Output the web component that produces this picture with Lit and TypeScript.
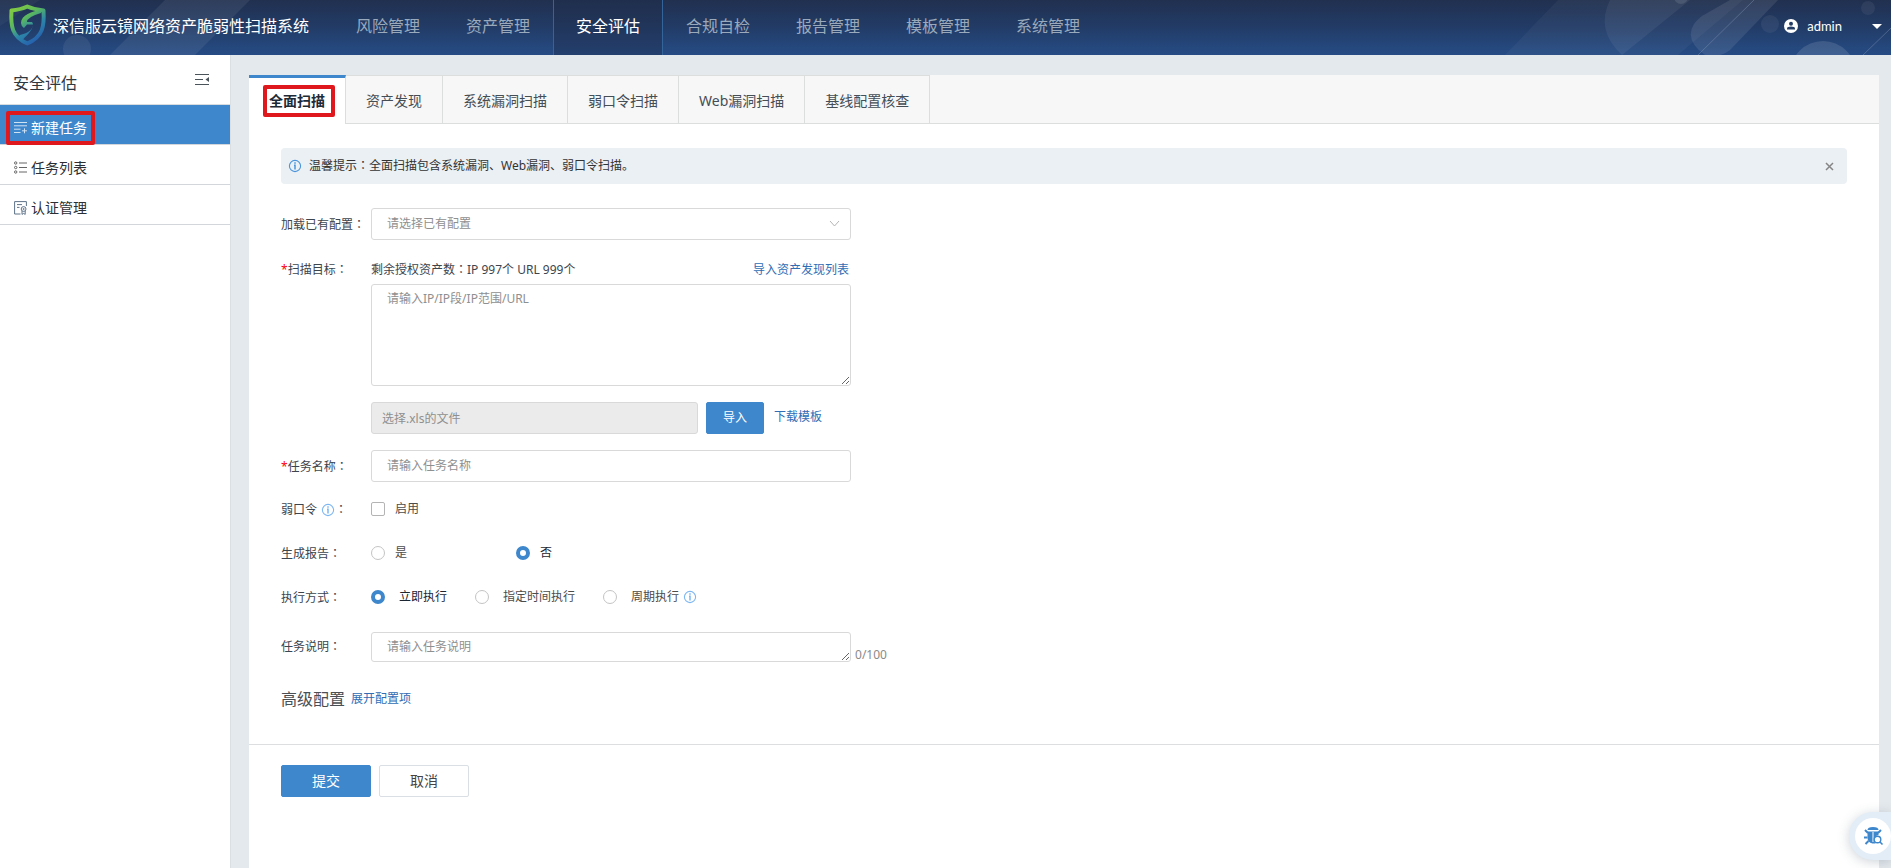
import { LitElement, html, svg, css } from "lit";
import { customElement, state } from "lit/decorators.js";
import { classMap } from "lit/directives/class-map.js";

const NAV = ["风险管理", "资产管理", "安全评估", "合规自检", "报告管理", "模板管理", "系统管理"];
const TABS = ["全面扫描", "资产发现", "系统漏洞扫描", "弱口令扫描", "Web漏洞扫描", "基线配置核查"];

const infoIcon = (cls = "") => html`<svg class="info ${cls}" viewBox="0 0 14 14" aria-hidden="true">
    <circle cx="7" cy="7" r="5.6" fill="none" stroke="currentColor" stroke-width="1.1" />
    <path d="M7 3.300v1.500M6 6.300h1v4.200" fill="none" stroke="currentColor" stroke-width="1.500" />
  </svg>`;

const colon = html`<span class="colon">：</span>`;

const newIcon = svg`<path d="M0 1.5h13M0 4.8h13M0 8.2h6.5M0 11.5h6.5M8 9.8h5M10.5 7.3v5" />`;
const listIcon = svg`<path d="M5 2h8M5 6.5h8M5 11h8" /><circle cx="1.7" cy="2" r="1.2" /><circle cx="1.7" cy="6.5" r="1.2" /><circle cx="1.7" cy="11" r="1.2" />`;
const certIcon = svg`<path d="M6.5 13H.6V.6h11.8V5M3 3.6h5M3 6.4h2.5" /><circle cx="9.6" cy="8" r="2.4" /><circle cx="9.6" cy="8" r=".6" /><path d="M8 10v3.4l1.6-1 1.6 1V10" />`;

const MENU = [
  { label: "新建任务", icon: newIcon, tone: "" },
  { label: "任务列表", icon: listIcon, tone: "" },
  { label: "认证管理", icon: certIcon, tone: "slate" },
];

@customElement("app-root")
export class AppRoot extends LitElement {
  @state() private nav = 2;
  @state() private menu = 0;
  @state() private tab = 0;
  @state() private tip = true;
  @state() private note = "";

  static styles = css`
    :host {
      display: flex;
      flex-direction: column;
      min-height: 100vh;
      background: #e4e9ed;
      color: #3c444d;
      font: 12px/20px "Noto Sans", "Noto Sans CJK SC", sans-serif;
    }
    * { box-sizing: border-box; }
    a { color: #2f6db5; text-decoration: none; }
    button, input, select, textarea { font: inherit; color: inherit; margin: 0; }
    button { cursor: pointer; }
    .colon { font-family: "Noto Sans CJK TC", sans-serif; line-height: 1; }

    .top {
      position: relative;
      display: flex;
      height: 55px;
      overflow: hidden;
      background: linear-gradient(#21304f, #223c67 50%, #264c85);
      color: #fff;
    }
    .deco { position: absolute; top: 0; height: 55px; }
    .deco.left { left: 0; width: 260px; }
    .deco.right { right: 0; width: 441px; }
    .brand {
      position: relative;
      display: flex;
      align-items: center;
      gap: 6px;
      width: 333px;
      flex: none;
      padding: 0 0 4px 8px;
      margin: 0;
      font-size: 16px;
      font-weight: 400;
      white-space: nowrap;
    }
    .brand svg { width: 39px; height: 43px; flex: none; }
    .nav { position: relative; display: flex; flex: 1; }
    .nav a {
      padding: 14px 22px 0;
      border: 1px solid transparent;
      border-width: 0 1px;
      font-size: 16px;
      line-height: 24px;
      color: #9aa9bb;
      white-space: nowrap;
    }
    .nav a.on { color: #fff; background: rgba(32, 45, 75, .4); border-color: #33659b; }
    .user {
      position: relative;
      display: flex;
      align-items: center;
      gap: 9px;
      padding: 0 9px 4px 0;
      border: 0;
      background: none;
      font-family: Lato, "Noto Sans", sans-serif;
      font-size: 13px;
    }
    .user svg { width: 14px; height: 14px; }
    .user .caret { width: 10px; height: 5px; margin: 2px 0 0 21px; }

    .body { display: flex; flex: 1; align-items: stretch; }
    .side { width: 231px; flex: none; background: #fff; border-right: 1px solid #dadfe3; }
    .side-head {
      display: flex;
      justify-content: space-between;
      height: 50px;
      padding: 16px 20px 0 13px;
      border-bottom: 1px solid #d9dcdf;
    }
    .side-head h2 { margin: 0; font-size: 16px; line-height: 24px; font-weight: 400; color: #2f3840; }
    .side-head button { padding: 0; border: 0; background: none; height: 16px; }
    .side-head svg { width: 16px; height: 16px; display: block; }
    .item {
      display: flex;
      align-items: center;
      gap: 4px;
      height: 40px;
      padding: 6px 0 0 14px;
      border-bottom: 1px solid #d3d7db;
      font-size: 14px;
      color: #2b2f33;
    }
    .item svg { width: 13px; height: 14px; flex: none; fill: none; stroke: #666; overflow: visible; }
    .item svg.slate { stroke: #5d7288; }
    .item.on { color: #fff; background: #3e87cc; }
    .item.on svg { stroke: #cfe2f4; }
    .mark { position: relative; display: inline-flex; align-items: center; gap: inherit; }
    .on > .mark::after {
      content: "";
      position: absolute;
      inset: -7px -8px;
      border: 4px solid #df181d;
      border-radius: 2px;
    }
    .tab.on > .mark::after { inset: -6px -10px -6px -6px; }

    .panel { flex: 1; min-width: 0; margin: 20px 12px 0 18px; background: #fff; }
    .tabs { display: flex; height: 49px; background: #f7f7f7; border-bottom: 1px solid #dcdddd; }
    .tab {
      height: 49px;
      padding: 2px 20px 0;
      border: 0;
      border-right: 1px solid #dcdddd;
      border-top: 1px solid #dcdddd;
      background: none;
      font-size: 14px;
      color: #454d55;
      white-space: nowrap;
    }
    .tab.on { background: #fff; border-top: 3px solid #3e87cc; padding: 0 20px; font-weight: 700; color: #1e2a36; }

    .content { padding: 24px 32px; }
    .tip {
      display: flex;
      align-items: center;
      height: 36px;
      padding: 0 12px 0 7px;
      border-radius: 4px;
      background: #ebf0f4;
      color: #333;
    }
    .tip p { flex: 1; margin: 0 0 0 7px; }
    .tip button { padding: 0; border: 0; background: none; display: flex; }
    .tip button svg { width: 11px; height: 11px; }
    .info { width: 14px; height: 14px; color: #4a95dc; flex: none; }
    .info.soft { color: #7db7f2; }

    .row { display: flex; margin-top: 16px; }
    .row.first { margin-top: 24px; }
    .row.scan { margin-top: 20px; }
    .row.remark { margin-top: 13px; }
    .label { width: 90px; height: 32px; flex: none; line-height: 34px; white-space: nowrap; }
    .scan .label { height: 20px; line-height: 20px; }
    .remark .label { height: 30px; line-height: 30px; }
    .label i { color: #f00; font-style: normal; }
    .label .info { vertical-align: -3px; margin-left: 4px; }
    .field { flex: 0 1 480px; min-width: 0; display: flex; flex-direction: column; }
    .box {
      width: 100%;
      height: 32px;
      padding: 0 15px 1px;
      border: 1px solid #d9d9d9;
      border-radius: 3px;
      background: #fff;
      outline: none;
    }
    .box::placeholder { color: #8f8f8f; opacity: 1; }
    .select { position: relative; }
    .select select { appearance: none; color: #8f8f8f; display: block; }
    .select svg { position: absolute; right: 11px; top: 12px; width: 11px; height: 8px; pointer-events: none; }
    .split { display: flex; justify-content: space-between; height: 20px; margin-bottom: 4px; padding-right: 2px; }
    textarea.box { display: block; padding: 4px 15px; resize: vertical; }
    textarea.tall { height: 102px; }
    textarea.short { height: 30px; }
    .upload { display: flex; gap: 8px; margin-top: 16px; }
    .upload .box { flex: 1; min-width: 0; padding: 0 10px; background: #ebebeb; }
    .upload a { margin-left: 2px; margin-right: 29px; line-height: 30px; }
    .btn {
      height: 32px;
      padding: 0;
      border: 1px solid #dadfe6;
      border-radius: 2px;
      background: #fff;
      font-size: 14px;
      width: 90px;
      color: #444;
    }
    .btn.primary { background: #3e87cc; border-color: #3e87cc; color: #fff; }
    .btn.small { width: 58px; font-size: 12px; flex: none; }

    .choices { margin-top: 5px; }
    .choices .row { margin: 0; height: 44px; align-items: center; }
    .opt { display: flex; align-items: center; gap: 10px; color: #4c4c4c; white-space: nowrap; }
    .opt input {
      appearance: none;
      width: 14px;
      height: 14px;
      border: 1px solid #b4b4b4;
      border-radius: 2px;
      background: #fff;
      flex: none;
    }
    .opt input[type="radio"] { border-radius: 50%; border-color: #c4c4c4; }
    .opt input[type="radio"]:checked { border: 4px solid #3e87cc; }
    .opt:has(:checked) { color: #1c2733; }
    .opt.wide { width: 145px; }
    .opts { display: flex; gap: 28px; }
    .opts.loose .opt { gap: 14px; }
    .opts.loose + .info { margin-left: 4px; }
    .opts.plain { gap: 0; }
    .count { align-self: flex-end; margin: 0 0 -3px 4px; color: #8a8a8a; }
    .adv { display: flex; align-items: center; gap: 6px; margin-top: 24px; }
    .adv h3 { margin: 0; font-size: 16px; line-height: 26px; font-weight: 400; color: #4a4f55; }
    .adv a { line-height: 26px; }
    .foot { display: flex; gap: 8px; margin-top: 8px; padding: 20px 32px; border-top: 1px solid #dcdedf; }

    .helper {
      position: fixed;
      right: 0;
      bottom: 8px;
      width: 42px;
      height: 48px;
      padding: 6px 0 6px 6px;
      border: 0;
      border-radius: 24px 0 0 24px;
      background: #e2edf7;
      box-shadow: 0 2px 12px rgba(60, 80, 100, .25);
    }
    .helper svg { display: block; width: 36px; height: 36px; }
  `;

  private go(e: Event, key: "nav" | "menu" | "tab", i: number) {
    e.preventDefault();
    this[key] = i;
  }

  private header() {
    return html`<header class="top">
      <svg class="deco left" viewBox="0 0 260 55" fill="#fff" fill-opacity=".07" aria-hidden="true">
        <path d="M0 0h40L0 26z" fill-opacity=".04" />
        <path d="M165 0h85l-55 55h-85z" />
        <circle cx="77" cy="49" r="14" />
      </svg>
      <svg class="deco right" viewBox="0 0 441 55" fill="#fff" fill-opacity=".06" aria-hidden="true">
        <path d="M108 0h185l-65 55H55z" fill-opacity=".04" />
        <path d="M160 0h80l-68 55Q145 30 160 0z" fill-opacity=".06" />
        <path d="M280 0h48l-48 50q-9 8-25 5-21-15-11-31 2-3 8-8z" fill-opacity=".09" />
        <path d="M304 0l-56 55M441 28l-28 27" stroke="#7f93b3" stroke-opacity=".45" />
        <circle cx="231" cy="-3" r="7" fill-opacity=".1" />
        <circle cx="320" cy="24" r="9" />
        <circle cx="418" cy="8" r="7" />
        <circle cx="373" cy="74" r="33" fill-opacity=".12" />
      </svg>
      <h1 class="brand">
        <svg viewBox="0 0 39 43" fill="none" aria-hidden="true">
          <defs>
            <linearGradient id="shield" gradientUnits="userSpaceOnUse" x1="6" y1="2" x2="32" y2="40">
              <stop offset="0" stop-color="#86cc3e" />
              <stop offset=".35" stop-color="#5bb85e" />
              <stop offset=".6" stop-color="#2c86a8" />
              <stop offset="1" stop-color="#2454b0" />
            </linearGradient>
          </defs>
          <path stroke="url(#shield)" stroke-width="4" stroke-linejoin="round"
            d="M3.500 6.500Q13 5.500 19.300 2.500 26 5.500 35.500 6.500C36.500 22 35 33 19.300 39.500 4 33 2.500 22 3.500 6.500z" />
          <path fill="url(#shield)"
            d="M34 6C24 7 13 11 13 19q0 3 3 5l3-3.500h6q0-1.500-1-2.500h-5q0-5 14-9zM25 19c0 8-6 10-13 12l-3 3 5 3C17 32 25 28 25 19z" />
        </svg>
        深信服云镜网络资产脆弱性扫描系统
      </h1>
      <nav class="nav">
        ${NAV.map((t, i) => html`<a href="#" class=${classMap({ on: i === this.nav })}
          @click=${(e: Event) => this.go(e, "nav", i)}>${t}</a>`)}
      </nav>
      <button class="user" type="button">
        <svg viewBox="0 0 14 14" aria-hidden="true">
          <circle cx="7" cy="7" r="7" fill="#fff" />
          <circle cx="7" cy="4.700" r="2" fill="#233c66" />
          <path d="M3 10.500V9.400Q3.200 7.600 7 7.600t4 1.800v1.100z" fill="#233c66" />
        </svg>
        admin
        <svg class="caret" viewBox="0 0 10 5" aria-hidden="true"><path d="M0 0h10L5 5z" fill="#fff" /></svg>
      </button>
    </header>`;
  }

  private sidebar() {
    return html`<aside class="side">
      <div class="side-head">
        <h2>安全评估</h2>
        <button type="button" aria-label="收起">
          <svg viewBox="0 0 16 16" aria-hidden="true">
            <path d="M1 3.500h14M1 8.500h8M1 13.500h14" stroke="#4a525a" stroke-width="1.200" />
            <path d="M15 6v5l-3.500-2.500z" fill="#4a525a" />
          </svg>
        </button>
      </div>
      <nav>
        ${MENU.map((m, i) => html`<a href="#" class=${classMap({ item: true, on: i === this.menu })}
          @click=${(e: Event) => this.go(e, "menu", i)}>
          <span class="mark"><svg class=${m.tone} viewBox="0 0 13 14" aria-hidden="true">${m.icon}</svg>${m.label}</span></a>`)}
      </nav>
    </aside>`;
  }

  private form() {
    return html`
      <div class="row first">
        <label class="label" for="config">加载已有配置${colon}</label>
        <div class="field select">
          <select class="box" id="config"><option>请选择已有配置</option></select>
          <svg viewBox="0 0 11 8" aria-hidden="true"><path d="M1 1l4.500 5L10 1" fill="none" stroke="#b5b5b5" /></svg>
        </div>
      </div>
      <div class="row scan">
        <label class="label" for="target"><i>*</i>扫描目标${colon}</label>
        <div class="field">
          <div class="split"><span>剩余授权资产数${colon}IP 997个 URL 999个</span><a href="#">导入资产发现列表</a></div>
          <textarea class="box tall" id="target" placeholder="请输入IP/IP段/IP范围/URL"></textarea>
          <div class="upload">
            <input class="box" type="text" disabled placeholder="选择.xls的文件" aria-label="选择.xls的文件" />
            <button class="btn primary small" type="button">导入</button>
            <a href="#">下载模板</a>
          </div>
        </div>
      </div>
      <div class="row">
        <label class="label" for="name"><i>*</i>任务名称${colon}</label>
        <div class="field"><input class="box" id="name" type="text" placeholder="请输入任务名称" /></div>
      </div>
      <div class="choices">
        <div class="row">
          <span class="label">弱口令${infoIcon("soft")}${colon}</span>
          <label class="opt"><input type="checkbox" />启用</label>
        </div>
        <div class="row" role="radiogroup" aria-label="生成报告">
          <span class="label">生成报告${colon}</span>
          <div class="opts plain">
            <label class="opt wide"><input type="radio" name="report" />是</label>
            <label class="opt"><input type="radio" name="report" checked />否</label>
          </div>
        </div>
        <div class="row" role="radiogroup" aria-label="执行方式">
          <span class="label">执行方式${colon}</span>
          <div class="opts loose">
            <label class="opt"><input type="radio" name="mode" checked />立即执行</label>
            <label class="opt"><input type="radio" name="mode" />指定时间执行</label>
            <label class="opt"><input type="radio" name="mode" />周期执行</label>
          </div>
          ${infoIcon("soft")}
        </div>
      </div>
      <div class="row remark">
        <label class="label" for="note">任务说明${colon}</label>
        <div class="field">
          <textarea class="box short" id="note" maxlength="100" placeholder="请输入任务说明"
            @input=${(e: Event) => (this.note = (e.target as HTMLTextAreaElement).value)}></textarea>
        </div>
        <span class="count">${this.note.length}/100</span>
      </div>
      <div class="adv"><h3>高级配置</h3><a href="#">展开配置项</a></div>`;
  }

  render() {
    return html`
      ${this.header()}
      <div class="body">
        ${this.sidebar()}
        <main class="panel">
          <div class="tabs" role="tablist">
            ${TABS.map((t, i) => html`<button type="button" role="tab" aria-selected=${i === this.tab}
              class=${classMap({ tab: true, on: i === this.tab })}
              @click=${(e: Event) => this.go(e, "tab", i)}><span class="mark">${t}</span></button>`)}
          </div>
          <div class="content">
            ${this.tip ? html`<div class="tip">${infoIcon()}
              <p>温馨提示${colon}全面扫描包含系统漏洞、Web漏洞、弱口令扫描。</p>
              <button type="button" aria-label="关闭" @click=${() => (this.tip = false)}>
                <svg viewBox="0 0 11 11" aria-hidden="true"><path d="M2 2l7 7M9 2l-7 7" stroke="#858585" stroke-width="1.500" /></svg>
              </button></div>` : ""}
            ${this.form()}
          </div>
          <div class="foot">
            <button class="btn primary" type="submit">提交</button>
            <button class="btn" type="button">取消</button>
          </div>
        </main>
      </div>
      <button class="helper" type="button" aria-label="漏洞助手">
        <svg viewBox="0 0 36 36" aria-hidden="true">
          <circle cx="18" cy="18" r="18" fill="#fff" />
          <path d="M12.500 12q0-3 5.500-3t5.500 3z" fill="#3e87cc" />
          <path d="M12.500 13.500h11V17a5 5 0 0 0-3 8.500h-3q-5-1-5-6z" fill="#3e87cc" />
          <path d="M13 15l-3-3M12.500 19.500H9M13.500 23l-3 3M23 15l3-3" fill="none" stroke="#3e87cc" stroke-width="2" />
          <path d="M18 14v10" stroke="#fff" />
          <circle cx="22.500" cy="21.500" r="3.300" fill="#fff" stroke="#3e87cc" stroke-width="1.400" />
          <path d="M25 24l2.500 2.500" stroke="#3e87cc" stroke-width="1.600" />
        </svg>
      </button>`;
  }
}
